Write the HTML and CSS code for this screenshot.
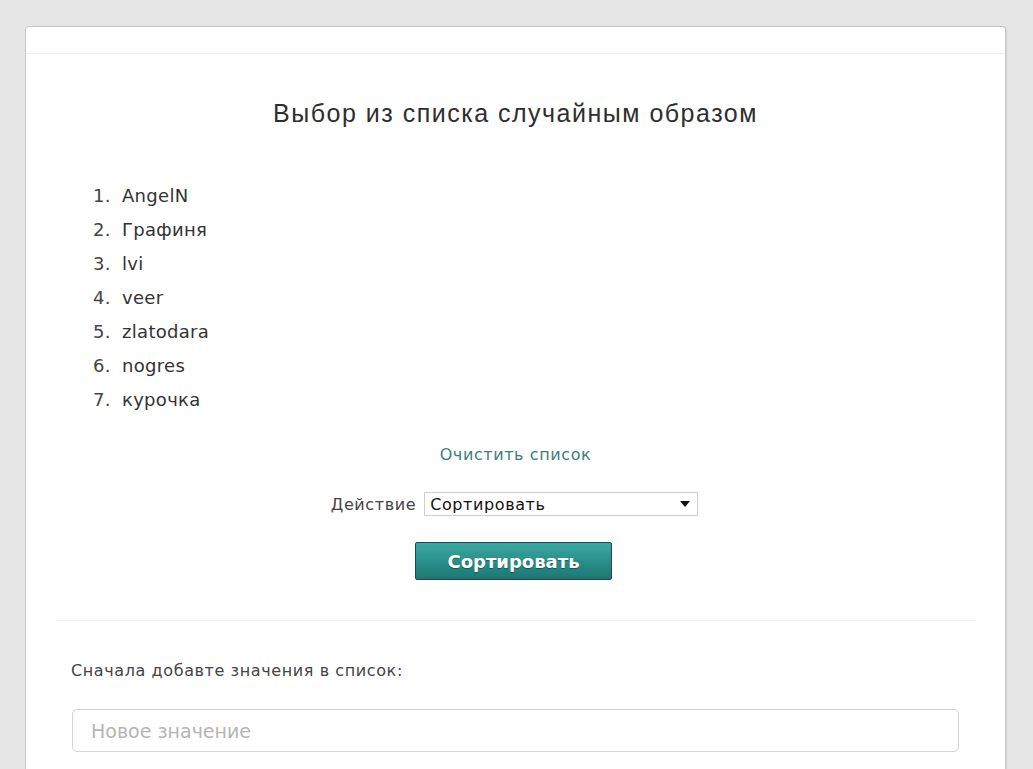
FILE: index.html
```html
<!DOCTYPE html>
<html lang="ru">
<head>
<meta charset="utf-8">
<title>Выбор из списка случайным образом</title>
<link rel="stylesheet" href="styles.css">
</head>
<body>
<div class="page">
  <div class="card">
    <div class="card-head"></div>
    <div class="card-body">
      <h1 class="title">Выбор из списка случайным образом</h1>
      <ol class="items">
        <li>AngelN</li>
        <li>Графиня</li>
        <li>lvi</li>
        <li>veer</li>
        <li>zlatodara</li>
        <li>nogres</li>
        <li>курочка</li>
      </ol>
      <div class="clear-row"><a class="clear-link" href="#">Очистить список</a></div>
      <div class="action-row">
        <span class="action-label">Действие</span>
        <div class="select">
          <span class="select-text">Сортировать</span>
          <svg class="select-arrow" width="10" height="6" viewBox="0 0 10 6"><path d="M0 0H10L5 6Z" fill="#111"/></svg>
        </div>
      </div>
      <div class="btn-row"><button class="btn">Сортировать</button></div>
      <div class="divider"></div>
      <div class="add-label">Сначала добавте значения в список:</div>
      <div class="input">Новое значение</div>
    </div>
  </div>
</div>
</body>
</html>
```

FILE: styles.css
```css
html, body {
  margin: 0;
  padding: 0;
  background: #e6e6e6;
  height: 100%;
  overflow: hidden;
}
.page {
  padding: 26px 0 0 25px;
  width: 981px;
}
.card {
  background: #fff;
  border: 1px solid #c9c9c9;
  border-bottom: none;
  border-radius: 4px 4px 0 0;
  box-shadow: 1px 0 1px rgba(0,0,0,0.08);
  height: 760px;
  box-sizing: border-box;
}
.card-head {
  height: 26px;
  border-bottom: 1px solid #efefef;
}
.card-body {
  padding: 0 31px;
  font-family: "DejaVu Sans", Verdana, sans-serif;
  color: #333;
}
.title {
  margin: 0;
  padding-top: 44px;
  font-family: "Liberation Sans", Arial, sans-serif;
  font-weight: normal;
  font-size: 25px;
  letter-spacing: 1.5px;
  line-height: 30px;
  text-align: center;
  color: #2e2e2e;
}
.items {
  margin: 51px 0 0 0;
  padding-left: 36px;
  list-style: none;
  counter-reset: item;
  font-size: 18px;
  letter-spacing: 0.3px;
  line-height: 34px;
  color: #333;
}
.items li {
  counter-increment: item;
  display: flex;
}
.items li::before {
  content: counter(item) ".";
  width: 29px;
  flex: none;
  color: #444;
}
.clear-row {
  margin-top: 28px;
  text-align: center;
  line-height: 20px;
}
.clear-link {
  font-size: 16px;
  letter-spacing: 0.6px;
  color: #3b7e7c;
  text-decoration: none;
}
.action-row {
  margin-top: 27px;
  display: flex;
  justify-content: center;
  align-items: center;
  gap: 8px;
  padding-right: 2px;
}
.action-label {
  font-size: 16px;
  letter-spacing: 0.6px;
  color: #444;
}
.select {
  width: 274px;
  height: 24px;
  box-sizing: border-box;
  border: 1px solid #cfcfcf;
  display: flex;
  align-items: center;
  justify-content: space-between;
  padding: 0 7px 0 5px;
  font-size: 16px;
  letter-spacing: 0.6px;
  color: #111;
}
.select-arrow {
  display: block;
}
.btn-row {
  margin-top: 26px;
  display: flex;
  justify-content: center;
  padding-right: 4px;
}
.btn {
  width: 197px;
  height: 38px;
  border: 1px solid #1d4b4a;
  border-radius: 2px;
  background: linear-gradient(#3ca8a2, #2a8f8b 50%, #1d7774);
  color: #fff;
  font-family: "DejaVu Sans", Verdana, sans-serif;
  font-weight: bold;
  font-size: 18px;
  text-shadow: 0 1px 1px rgba(0,0,0,0.35);
  padding: 0;
}
.divider {
  margin-top: 40px;
  border-top: 1px solid #eeeeee;
}
.add-label {
  margin-top: 40px;
  padding-left: 14px;
  font-size: 16px;
  letter-spacing: 0.6px;
  line-height: 20px;
  color: #444;
}
.input {
  margin: 28px 0 0 15px;
  width: 887px;
  height: 43px;
  box-sizing: border-box;
  border: 1px solid #d4d4d4;
  border-radius: 5px;
  padding-left: 18px;
  display: flex;
  align-items: center;
  font-size: 19px;
  color: #b5b5b5;
}
```
